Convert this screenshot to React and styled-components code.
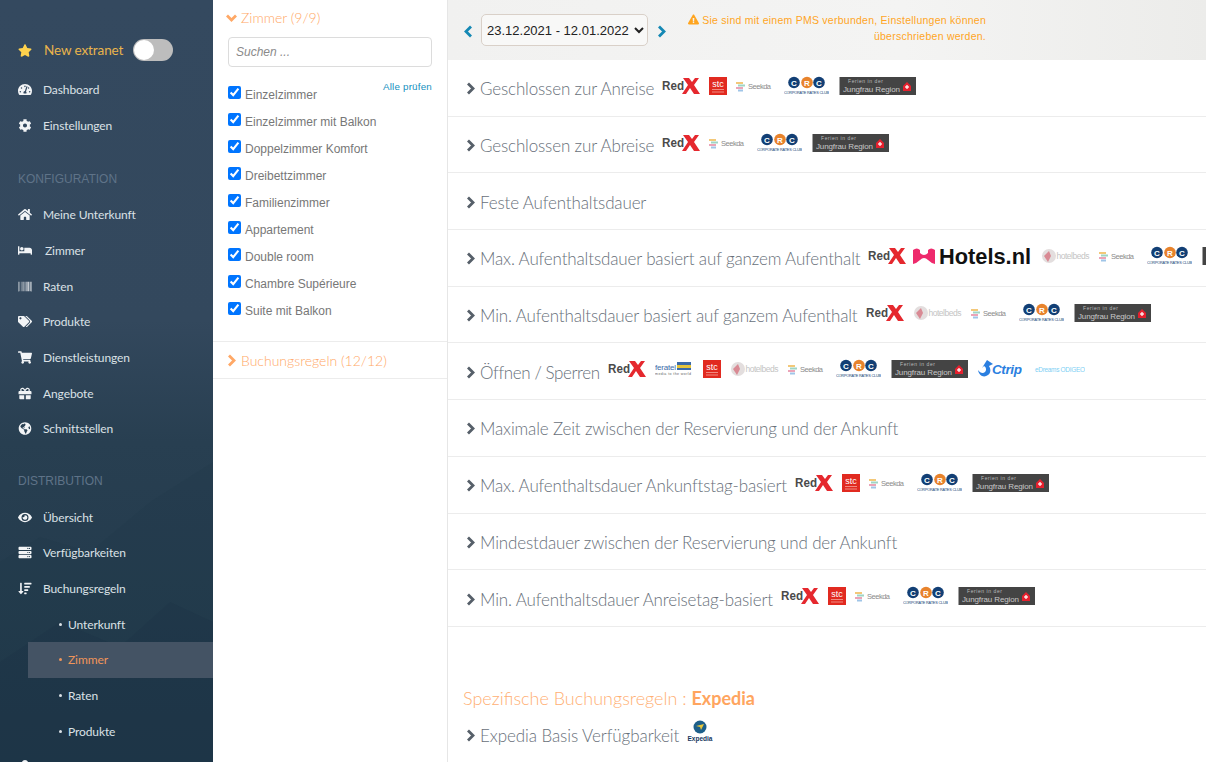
import React from "react";
import styled, { createGlobalStyle } from "styled-components";
import {
  FaStar, FaTachometerAlt, FaCog, FaHome, FaBed, FaBarcode, FaTags, FaShoppingCart,
  FaGift, FaGlobeAmericas, FaEye, FaServer, FaSortAmountDown,
  FaExclamationTriangle, FaUser,
} from "react-icons/fa";

const GlobalStyle = createGlobalStyle`
  html, body { margin: 0; height: 100%; overflow: hidden; background: #fff; }
  #root { height: 100%; }
  * { box-sizing: border-box; }
`;

const Page = styled.div`
  display: flex;
  height: 762px;
  overflow: hidden;
  font-family: "Lato", sans-serif;
`;

/* ---------- sidebar ---------- */
const Sidebar = styled.nav`
  position: relative;
  flex: 0 0 213px;
  padding-top: 32px;
  overflow: hidden;
  background: linear-gradient(180deg, #34495f 0%, #33485d 42%, #283f51 58%, #20384a 100%);
`;

const Mountains = styled.svg`
  position: absolute;
  left: 0;
  bottom: 0;
  width: 213px;
  height: 330px;
`;

const NavList = styled.div`
  position: relative;
  display: flex;
  flex-direction: column;
`;

const NavItem = styled.div`
  display: flex;
  align-items: center;
  height: 35.7px;
  padding-left: 18px;
  font-size: 12px;
  letter-spacing: -0.1px;
  color: #dbe1e6;
  & svg { flex: 0 0 14px; font-size: 13px; color: #f2f4f6; }
  & span { margin-left: ${(p) => p.$shift || 11}px; }
`;

const ExtranetItem = styled(NavItem)`
  height: 36px;
  margin-bottom: 4px;
  font-size: 13.5px;
  color: #e9b44c;
  & svg { color: #ffd24d; }
  & span { margin-left: 12px; }
`;

const Toggle = styled.i`
  display: flex;
  width: 40px;
  height: 22px;
  margin-left: 9.5px;
  padding: 1px;
  border-radius: 11px;
  background: #bdbdbd;
  &::before { content: ""; width: 20px; height: 20px; border-radius: 50%; background: #fff; }
`;

const Section = styled.div`
  margin-top: ${(p) => p.$top}px;
  height: 35px;
  padding-left: 18px;
  font: 12px/35px "Liberation Sans", sans-serif;
  color: #5f7388;
`;

const SubItem = styled.div`
  display: flex;
  align-items: center;
  height: 35.7px;
  margin-left: 28px;
  padding-left: 31px;
  font-size: 12px;
  letter-spacing: -0.1px;
  color: ${(p) => (p.$active ? "#f0955a" : "#dbe1e6")};
  background: ${(p) => (p.$active ? "#445364" : "transparent")};
  &::before {
    content: "";
    width: 3px;
    height: 3px;
    margin-right: 6px;
    border-radius: 50%;
    background: currentColor;
  }
`;

/* ---------- filter panel ---------- */
const Panel = styled.aside`
  flex: 0 0 235px;
  border-right: 1px solid #e6e6e6;
  padding-top: 8px;
`;

const PanelHead = styled.div`
  display: flex;
  align-items: center;
  height: 19px;
  padding-left: ${(p) => p.$pad}px;
  font-size: 14px;
  font-weight: 300;
  color: #ffa866;
`;

const Search = styled.input`
  display: block;
  width: 204px;
  height: 30px;
  margin: 10px 0 0 15px;
  padding: 0 7px;
  border: 1px solid #dcdcdc;
  border-radius: 4px;
  font: italic 12px "Liberation Sans", sans-serif;
  &::placeholder { color: #8a8a8a; opacity: 1; }
`;

const CheckList = styled.div`
  margin: 19px 15px 0;
  height: 255px;
`;

const CheckRow = styled.label`
  display: flex;
  align-items: flex-start;
  height: 27.05px;
  font: 12px/16px "Liberation Sans", sans-serif;
  color: #777;
  & input { flex: none; width: 13px; height: 13px; margin: 0 4px 0 0; }
  & span { margin-top: 1px; }
`;

const CheckAll = styled.a`
  margin: -7px 0 0 auto;
  font-size: 9.8px;
  letter-spacing: 0.2px;
  color: #1590c0;
`;

const Accordion = styled.div`
  display: flex;
  align-items: center;
  height: 38px;
  border-top: 1px solid #ececec;
  border-bottom: 1px solid #ececec;
`;

const ChevronIcon = styled.svg`
  flex: none;
  display: block;
  fill: none;
  stroke: ${(p) => p.$color};
  stroke-width: 2.8;
  margin-right: ${(p) => p.$gap || 0}px;
`;

const ChevronRight = ({ color, gap }) => (
  <ChevronIcon width="9" height="13" viewBox="0 0 9 13" $color={color} $gap={gap}>
    <path d="M2 1.5l5 5-5 5" />
  </ChevronIcon>
);

const ChevronLeft = ({ color, gap }) => (
  <ChevronIcon width="9" height="13" viewBox="0 0 9 13" $color={color} $gap={gap}>
    <path d="M7 1.5l-5 5 5 5" />
  </ChevronIcon>
);

const ChevronDown = ({ color, gap }) => (
  <ChevronIcon width="11" height="8" viewBox="0 0 11 8" $color={color} $gap={gap}>
    <path d="M1 1.5l4.5 4.5L10 1.5" />
  </ChevronIcon>
);

/* ---------- main ---------- */
const Main = styled.main`
  flex: 1;
  min-width: 0;
  overflow: hidden;
`;

const TopBar = styled.header`
  display: flex;
  align-items: flex-start;
  height: 60px;
  padding: 14px 220px 0 16px;
  background: linear-gradient(90deg, #f1f1f0 0%, #f4f4f3 60%, #ececea 100%);
`;

const Arrow = styled.span`
  display: flex;
  height: 34px;
  align-items: center;
`;

const DateSelect = styled.select`
  width: 167px;
  height: 32px;
  margin: 0 9px 0 8px;
  padding: 0 1px 0 1px;
  border: 1px solid #d9d0c8;
  border-radius: 5px;
  background-color: #f8f8f7;
  font: 13px "Liberation Sans", sans-serif;
  color: #222;
`;

const Warning = styled.div`
  flex: 1;
  margin-top: -2px;
  text-align: right;
  font: 10.5px/16px "Liberation Sans", sans-serif;
  letter-spacing: 0.25px;
  color: #ffa51f;
  & svg { font-size: 11px; vertical-align: -1px; margin-right: 3px; }
`;

const RuleRow = styled.div`
  display: flex;
  align-items: center;
  height: 56.7px;
  padding: 2px 0 0 18px;
  border-bottom: ${(p) => (p.$plain ? "none" : "1px solid #ececec")};
  white-space: nowrap;
`;

const RuleTitle = styled.span`
  flex: none;
  margin: 0 8px 0 5px;
  font-size: 17px;
  letter-spacing: ${(p) => p.$spacing ?? -0.15}px;
  font-weight: 300;
  color: #68707a;
`;

const Logos = styled.div`
  display: flex;
  flex: none;
  gap: 9px;
  align-items: center;
  margin-top: -6px;
`;

const SpecificTitle = styled.h3`
  margin: 59px 0 -4px 15px;
  font-size: 18px;
  line-height: 24px;
  font-weight: 300;
  color: #ffaf73;
  & b { font-weight: 700; color: #ffa55f; }
`;

const LogoBox = styled.svg`
  flex: none;
  display: block;
`;

const HotelsBox = styled(LogoBox)`
  margin-left: -2px;
`;

const RedX = () => (
  <LogoBox width="38" height="20" viewBox="0 0 38 20">
    <text x="0" y="14" fontFamily="Liberation Sans" fontWeight="700" fontSize="12.5" fill="#4a4a4a" textLength="22" lengthAdjust="spacingAndGlyphs">Red</text>
    <path d="M21 2h6l3 4 3-4h4l-5 7 6 9h-6l-4-6-4 6h-4l6-9z" fill="#e5282e" />
  </LogoBox>
);

const Stc = () => (
  <LogoBox width="18" height="18" viewBox="0 0 18 18">
    <rect width="18" height="18" fill="#e12a20" />
    <text x="9" y="9.5" textAnchor="middle" fontFamily="Liberation Sans" fontSize="9" fill="#fff">stc</text>
    <rect x="3" y="12" width="12" height="1" fill="#f28a80" />
    <rect x="3" y="14.5" width="12" height="1" fill="#f28a80" />
  </LogoBox>
);

const Seekda = () => (
  <LogoBox width="39" height="14" viewBox="0 0 39 14">
    <rect x="0" y="3" width="7" height="2" fill="#f3c879" />
    <rect x="2" y="5.5" width="7" height="2" fill="#9fd5c5" />
    <rect x="0" y="8" width="7" height="2" fill="#eba4b8" />
    <rect x="2" y="10.5" width="5" height="2" fill="#9fc5e8" />
    <text x="12" y="10" fontFamily="Liberation Sans" fontSize="7.5" fill="#8b8b8b" textLength="23">Seekda</text>
  </LogoBox>
);

const Crc = () => (
  <LogoBox width="45" height="20" viewBox="0 0 45 20">
    {[
      [10, "C", "#123f75"],
      [23, "R", "#e8832c"],
      [35, "C", "#123f75"],
    ].map(([cx, l, c], i) => (
      <g key={i}>
        <circle cx={cx} cy="6.5" r="5.8" fill={c} />
        <text x={cx} y="9.5" textAnchor="middle" fontFamily="Liberation Sans" fontWeight="700" fontSize="8" fill="#fff">{l}</text>
      </g>
    ))}
    <text x="0" y="17.5" fontFamily="Liberation Sans" fontSize="3.8" fill="#123f75" textLength="45">CORPORATE RATES CLUB</text>
  </LogoBox>
);

const Jungfrau = () => (
  <LogoBox width="78" height="18" viewBox="0 0 78 18">
    <rect x="1.5" y="0" width="76.5" height="18" fill="#444" />
    <text x="10" y="6" fontFamily="Liberation Sans" fontSize="5" fill="#bbb" textLength="35">Ferien in der</text>
    <text x="5" y="14.5" fontFamily="Liberation Sans" fontSize="8" fill="#c8c8c8" textLength="57">Jungfrau Region</text>
    <path d="M65 9l4-4 4 4v5h-8z" fill="#e5202e" />
    <rect x="68.4" y="8" width="1.2" height="4" fill="#fff" />
    <rect x="67" y="9.4" width="4" height="1.2" fill="#fff" />
  </LogoBox>
);

const Hotelbeds = () => (
  <LogoBox width="49" height="16" viewBox="0 0 49 16">
    <circle cx="8" cy="8" r="7" fill="#e3dede" />
    <path d="M3 8l5-5 2 5-3 6z" fill="#d98a94" />
    <text x="15.5" y="11" fontFamily="Liberation Sans" fontSize="8.5" fill="#c4c4c4" textLength="33">hotelbeds</text>
  </LogoBox>
);

const HotelsNl = () => (
  <HotelsBox width="119" height="20" viewBox="0 0 119 20">
    <path d="M0 4Q4 1 7 4L7 7Q11 11 15 7L15 4Q18 1 22 4L22 18Q18 17 15 14Q11 10 7 14Q4 17 0 18Z" fill="#ee2a6c" />
    <text x="26" y="18" fontFamily="Liberation Sans" fontWeight="700" fontSize="22" fill="#111" textLength="92" lengthAdjust="spacingAndGlyphs">Hotels.nl</text>
  </HotelsBox>
);

const Feratel = () => (
  <LogoBox width="39" height="16" viewBox="0 0 39 16">
    <text x="0" y="8.5" fontFamily="Liberation Sans" fontSize="8" fill="#3b6aa8" textLength="21">feratel</text>
    <rect x="22" y="1" width="14" height="3" fill="#3b6aa8" />
    <rect x="22" y="4" width="14" height="3" fill="#e6c43a" />
    <rect x="22" y="7" width="14" height="2" fill="#3b6aa8" />
    <text x="0" y="14" fontFamily="Liberation Sans" fontSize="3.6" fill="#666" textLength="36">media to the world</text>
  </LogoBox>
);

const Ctrip = () => (
  <LogoBox width="45" height="20" viewBox="0 0 45 20">
    <path d="M10 1l6 4-4 2c2 3 2 7-1 9-4 3-9 1-10-5 2 3 5 4 7 2 2-2 1-5-1-6l-2 2z" fill="#2b7fe0" />
    <text x="15" y="15" fontFamily="Liberation Sans" fontWeight="700" fontStyle="italic" fontSize="13.5" fill="#2b7fe0" textLength="30">Ctrip</text>
  </LogoBox>
);

const EDreams = () => (
  <LogoBox width="54" height="8" viewBox="0 0 54 8">
    <text x="4" y="6.5" fontFamily="Liberation Sans" fontSize="6.5" fill="#7ed0f4" textLength="50">eDreams ODIGEO</text>
  </LogoBox>
);

const ExpediaLogo = () => (
  <LogoBox width="26" height="24" viewBox="0 0 26 24">
    <circle cx="13" cy="7" r="6.5" fill="#1d5f8a" />
    <path d="M9 6l8-2-3 6-1-3z" fill="#e8c83a" />
    <text x="13" y="21" textAnchor="middle" fontFamily="Liberation Sans" fontWeight="700" fontSize="6.5" fill="#17375e">Expedia</text>
  </LogoBox>
);

const Rule = ({ title, logos = [], plain, spacing }) => (
  <RuleRow $plain={plain}>
    <ChevronRight color="#565f69" />
    <RuleTitle $spacing={spacing}>{title}</RuleTitle>
    <Logos>{logos.map((L, i) => <L key={i} />)}</Logos>
  </RuleRow>
);

const rooms = [
  "Einzelzimmer", "Einzelzimmer mit Balkon", "Doppelzimmer Komfort", "Dreibettzimmer",
  "Familienzimmer", "Appartement", "Double room", "Chambre Supérieure", "Suite mit Balkon",
];

const rules = [
  { title: "Geschlossen zur Anreise", logos: [RedX, Stc, Seekda, Crc, Jungfrau] },
  { title: "Geschlossen zur Abreise", logos: [RedX, Seekda, Crc, Jungfrau] },
  { title: "Feste Aufenthaltsdauer" },
  { title: "Max. Aufenthaltsdauer basiert auf ganzem Aufenthalt", logos: [RedX, HotelsNl, Hotelbeds, Seekda, Crc, Jungfrau] },
  { title: "Min. Aufenthaltsdauer basiert auf ganzem Aufenthalt", logos: [RedX, Hotelbeds, Seekda, Crc, Jungfrau] },
  { title: "Öffnen / Sperren", spacing: -0.4, logos: [RedX, Feratel, Stc, Hotelbeds, Seekda, Crc, Jungfrau, Ctrip, EDreams] },
  { title: "Maximale Zeit zwischen der Reservierung und der Ankunft" },
  { title: "Max. Aufenthaltsdauer Ankunftstag-basiert", logos: [RedX, Stc, Seekda, Crc, Jungfrau] },
  { title: "Mindestdauer zwischen der Reservierung und der Ankunft" },
  { title: "Min. Aufenthaltsdauer Anreisetag-basiert", logos: [RedX, Stc, Seekda, Crc, Jungfrau] },
];

export default function App() {
  return (
    <Page>
      <GlobalStyle />
      <Sidebar>
        <Mountains viewBox="0 0 213 330" preserveAspectRatio="none">
          <path d="M0 130L40 105 90 120 150 70 213 30V330H0z" fill="#1d3344" opacity="0.15" />
          <path d="M0 230L60 190 120 215 170 170 213 190V330H0z" fill="#1a2f40" opacity="0.2" />
        </Mountains>
        <NavList>
          <ExtranetItem>
            <FaStar /><span>New extranet</span><Toggle />
          </ExtranetItem>
          <NavItem><FaTachometerAlt /><span>Dashboard</span></NavItem>
          <NavItem><FaCog /><span>Einstellungen</span></NavItem>
          <Section $top={18.5}>KONFIGURATION</Section>
          <NavItem><FaHome /><span>Meine Unterkunft</span></NavItem>
          <NavItem $shift={13}><FaBed /><span>Zimmer</span></NavItem>
          <NavItem><FaBarcode /><span>Raten</span></NavItem>
          <NavItem><FaTags /><span>Produkte</span></NavItem>
          <NavItem><FaShoppingCart /><span>Dienstleistungen</span></NavItem>
          <NavItem><FaGift /><span>Angebote</span></NavItem>
          <NavItem><FaGlobeAmericas /><span>Schnittstellen</span></NavItem>
          <Section $top={17.5}>DISTRIBUTION</Section>
          <NavItem><FaEye /><span>Übersicht</span></NavItem>
          <NavItem><FaServer /><span>Verfügbarkeiten</span></NavItem>
          <NavItem><FaSortAmountDown /><span>Buchungsregeln</span></NavItem>
          <SubItem>Unterkunft</SubItem>
          <SubItem $active>Zimmer</SubItem>
          <SubItem>Raten</SubItem>
          <SubItem>Produkte</SubItem>
          <NavItem><FaUser /></NavItem>
        </NavList>
      </Sidebar>

      <Panel>
        <PanelHead $pad={13}><ChevronDown color="#ffa866" gap={4} />Zimmer (9/9)</PanelHead>
        <Search placeholder="Suchen ..." />
        <CheckList>
          {rooms.map((room, i) => (
            <CheckRow key={room}>
              <input type="checkbox" defaultChecked />
              <span>{room}</span>
              {i === 0 && <CheckAll>Alle prüfen</CheckAll>}
            </CheckRow>
          ))}
        </CheckList>
        <Accordion>
          <PanelHead $pad={14}><ChevronRight color="#ffa866" gap={5} />Buchungsregeln (12/12)</PanelHead>
        </Accordion>
      </Panel>

      <Main>
        <TopBar>
          <Arrow><ChevronLeft color="#1488b4" /></Arrow>
          <DateSelect defaultValue="a">
            <option value="a">23.12.2021 - 12.01.2022</option>
          </DateSelect>
          <Arrow><ChevronRight color="#1488b4" /></Arrow>
          <Warning>
            <FaExclamationTriangle />Sie sind mit einem PMS verbunden, Einstellungen können<br />überschrieben werden.
          </Warning>
        </TopBar>
        {rules.map((rule) => <Rule key={rule.title} {...rule} />)}
        <SpecificTitle>Spezifische Buchungsregeln : <b>Expedia</b></SpecificTitle>
        <Rule plain title="Expedia Basis Verfügbarkeit" spacing={-0.08} logos={[ExpediaLogo]} />
      </Main>
    </Page>
  );
}
